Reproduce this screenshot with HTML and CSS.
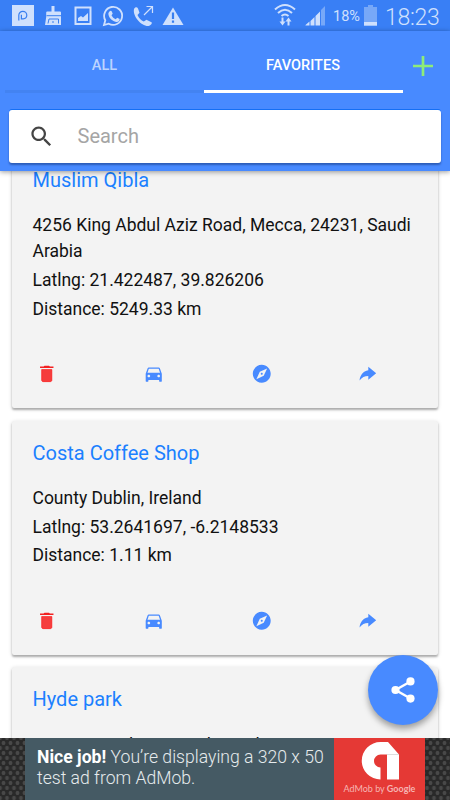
FILE: index.html
```html
<!DOCTYPE html>
<html lang="en">
<head>
<meta charset="utf-8">
<title>Favorites</title>
<link rel="stylesheet" href="styles.css">
</head>
<body>
<svg class="symbols" width="0" height="0" aria-hidden="true">
  <symbol id="trash" viewBox="0 0 24 24"><path fill="#f53d3d" stroke="#f00" stroke-width=".6" d="M6.3 19c0 1.1.7 1.8 1.7 1.8h8c1 0 1.700-.7 1.700-1.800V7.300H6.300z"/><path fill="#f32020" d="M19.500 4H15.500l-1-1h-5l-1 1H4.500v1.700h15z"/></symbol>
  <symbol id="car" viewBox="0 0 24 24"><path d="M18.920 6.010C18.720 5.420 18.160 5 17.500 5h-11c-.66 0-1.210.42-1.420 1.010L3 12v8c0 .55.45 1 1 1h1c.55 0 1-.45 1-1v-1h12v1c0 .55.45 1 1 1h1c.55 0 1-.45 1-1v-8l-2.080-5.990zM6.500 16c-.83 0-1.500-.67-1.500-1.500S5.670 13 6.500 13s1.500.67 1.500 1.500S7.330 16 6.500 16zm11 0c-.83 0-1.500-.67-1.500-1.500s.67-1.500 1.500-1.500 1.500.67 1.500 1.500-.67 1.500-1.500 1.500zM5 11l1.500-4.500h11L19 11H5z"/></symbol>
  <symbol id="compass" viewBox="0 0 24 24"><path d="M12 10.900c-.61 0-1.100.49-1.100 1.100s.49 1.100 1.100 1.100 1.100-.49 1.100-1.100-.49-1.100-1.100-1.100zM12 2C6.480 2 2 6.480 2 12s4.480 10 10 10 10-4.480 10-10S17.520 2 12 2zm2.190 12.190L6 18l3.810-8.190L18 6l-3.810 8.190z"/></symbol>
  <symbol id="forward" viewBox="0 0 24 24"><path d="M11.500 8.200V4.100L20.300 11.400l-8.800 7.300v-4.300c-4.300 0-7 1.300-9.800 5 .8-5.500 3.700-10.100 9.800-11.200z"/></symbol>
</svg>
<div class="screen">
  <div class="status">
    <svg class="status-left" width="190" height="31" viewBox="0 0 190 31">
      <path fill="#cfe0fd" d="M12 5h22v21H12z"/>
      <path fill="none" stroke="#397ff0" stroke-width="1.200" d="M18.800 20.500v-5.200a4 4 0 0 1 8 0 3.700 3.700 0 0 1-3.800 3.500h-1.600v-4"/>
      <g fill="#cfe0fd">
        <path d="M51.500 6h3v5.500h5.500q1 0 1 1V25H45l1.200-8v-4.500q0-1 1-1h4.300z"/>
        <path fill-rule="evenodd" d="M74.500 6.500h17v18.500h-17zM76.500 8.500V23h13V8.500z"/>
        <path d="M78 21v-3l3-2 2 1.500 5-4.500v8z"/>
        <path d="m173 7.500 10.500 17.500h-21z"/>
      </g>
      <path fill="none" stroke="#397ff0" stroke-width="1" d="M46.500 15.700h14.500M48 23.500l1-4.500h9.500v4.500M53 23v-2"/>
      <path fill="none" stroke="#cfe0fd" stroke-width="1.800" d="m104 25 1.300-4.700a9 9 0 1 1 3.400 3.400z"/>
      <path fill="#cfe0fd" d="M109.500 11.500c1-1.200 2-.8 2.500.5l.7 1.700-1.200 1.500c1 2 2.300 3.100 4.200 4l1.500-1.500 2.500 1.300c-.2 2.500-2 3.400-4.300 2.700-3.700-1.200-6.700-4.200-7-7.700 0-1 .3-1.800 1.100-2.500z"/>
      <path fill="#cfe0fd" d="M134 9c1-2 3-2.500 4-.5l1.500 4.200-2 2.300c1.500 3.500 3.500 5.300 6.300 6.500l2.700-1.700 5 2.500c1 .8-.5 3.200-3 3.700-7.500.3-16-10-14.500-17z"/>
      <path fill="none" stroke="#cfe0fd" stroke-width="1.200" d="m144 15 8-8M146.500 6.500h6V13"/>
      <path stroke="#397ff0" stroke-width="2.200" d="M173 12.500v6.500M173 20.500v2.300"/>
    </svg>
    <svg class="status-net" width="54" height="31" viewBox="272 0 54 31">
      <g fill="none" stroke="#cfe0fd" stroke-width="2"><path d="M275 9.500q10-9 20 0M278 13q7-6.500 14 0M281.500 16q3.500-3 7 0"/></g>
      <path fill="#cfe0fd" d="M281.500 17.500h2v4h2l-3 4-3-4h2zM287.500 25.500h2v-4h2l-3-4-3 4h2z"/>
      <path fill="#cfe0fd" d="M305.500 25.500h4v-4l-4 3.500zM310.500 25.500h4V17l-4 4zM315.500 25.500h4.500V11.500l-4.500 4.500z"/>
      <path fill="#77a8f8" d="M321 25.500h4V6l-4 4z"/>
    </svg>
    <span class="percent">18%</span>
    <svg class="battery" width="13" height="21" viewBox="0 0 13 21"><path fill="#77a8f8" d="M4 0h5v2h4v19H0V2h4z"/><path fill="#cfe0fd" d="M0 17h13v3.500H0z"/></svg>
    <span class="clock">18:23</span>
  </div>
  <header class="header">
    <nav class="tabs">
      <div class="tab">ALL</div>
      <div class="tab active">FAVORITES</div>
      <svg class="add" width="22" height="22" viewBox="0 0 22 22"><path stroke="#8eec79" stroke-width="2.700" d="M11 1v20M1 11h20"/></svg>
    </nav>
    <div class="search">
      <svg width="27" height="27" viewBox="0 0 24 24"><path fill="#444" d="M15.500 14h-.79l-.28-.27C15.410 12.590 16 11.110 16 9.500 16 5.910 13.090 3 9.500 3S3 5.910 3 9.500 5.910 16 9.500 16c1.610 0 3.090-.59 4.230-1.570l.27.280v.79l5 4.990L20.490 19l-4.990-5zm-6 0C7.010 14 5 11.990 5 9.500S7.010 5 9.500 5 14 7.010 14 9.500 11.990 14 9.500 14z"/></svg>
      <span>Search</span>
    </div>
  </header>
  <main class="content">
    <div class="list">
      <article class="card">
        <h2>Muslim Qibla</h2>
        <p>4256 King Abdul Aziz Road, Mecca, 24231, Saudi Arabia</p>
        <p>Latlng: 21.422487, 39.826206</p>
        <p>Distance: 5249.33 km</p>
        <div class="actions"><svg><use href="#trash"/></svg><svg><use href="#car"/></svg><svg><use href="#compass"/></svg><svg><use href="#forward"/></svg></div>
      </article>
      <article class="card">
        <h2>Costa Coffee Shop</h2>
        <p>County Dublin, Ireland</p>
        <p>Latlng: 53.2641697, -6.2148533</p>
        <p>Distance: 1.11 km</p>
        <div class="actions"><svg><use href="#trash"/></svg><svg><use href="#car"/></svg><svg><use href="#compass"/></svg><svg><use href="#forward"/></svg></div>
      </article>
      <article class="card">
        <h2>Hyde park</h2>
        <p>Greater London, United Kingdom</p>
      </article>
    </div>
    <div class="fab"><svg width="32" height="32" viewBox="0 0 32 32"><path fill="none" stroke="#fff" stroke-width="2.400" d="M23.500 7.500 8.500 16l15 8.500"/><g fill="#fff"><circle cx="8.500" cy="16" r="4.100"/><circle cx="23.500" cy="7.400" r="4.100"/><circle cx="23.500" cy="24.600" r="4.100"/></g></svg></div>
  </main>
  <footer class="ad">
    <div class="ad-text"><b>Nice job!</b> You’re displaying a 320 x 50<br>test ad from AdMob.</div>
    <div class="admob">
      <svg width="38" height="38" viewBox="0 0 38 38"><path fill="#fff" d="M19.500 37.500A18.700 18.700 0 1 1 19.500 0H27l11 12.500v25H26V12.500h-6.500a6.500 6.500 0 0 0 0 13z"/><path stroke="#ddd" d="M26 12.500h12"/></svg>
      <span>AdMob by <b>Google</b></span>
    </div>
  </footer>
</div>
</body>
</html>
```
FILE: styles.css
```css
* { box-sizing: border-box; }
body { margin: 0; font-family: Roboto, "Liberation Sans", sans-serif; }
.symbols { position: absolute; }
.screen { width: 450px; height: 800px; display: flex; flex-direction: column; overflow: hidden; background: #fff; }
.status { height: 31px; flex: none; display: flex; align-items: center; background: #397ff5; color: #cfe0fd; }
.status svg { flex: none; }
.status-net { margin-left: 82px; }
.percent { width: 32px; margin-left: 7px; font-size: 14.500px; line-height: 31px; padding-top: 2px; }
.battery { margin-left: -1px; }
.clock { margin-left: 8px; font-size: 23px; font-weight: 300; line-height: 31px; padding-top: 3px; letter-spacing: -.3px; }
.header { height: 140px; flex: none; background: #488aff; position: relative; z-index: 1; box-shadow: 0 1px 5px rgba(0,0,0,.4); }
.tabs { height: 62px; display: flex; align-items: center; padding-left: 5px; }
.tab { width: 199px; height: 62px; line-height: 69px; text-align: center; font-size: 14.500px; font-weight: 500; color: #bcd4ff; border-bottom: 3px solid #4383f2; }
.tab.active { color: #fff; border-color: #fff; padding-right: 1px; }
.add { margin: 7px 0 0 8.500px; }
.search { height: 53px; margin: 17px 9px 0; padding-left: 19px; display: flex; align-items: center; background: #fff; border-radius: 3px; box-shadow: 0 2px 2px rgba(0,25,80,.4), 0 -1px 0 #146ff5; }
.search span { margin: -2px 0 0 22.500px; font-size: 20px; color: #a5a5a5; }
.content { flex: 1; min-height: 0; position: relative; overflow: hidden; }
.list { margin-top: -22.600px; padding: 0 12.500px 0 12px; display: flex; flex-direction: column; gap: 12.500px; }
.card { flex: none; height: 234px; padding: 20px 20px 0 20.500px; border-radius: 2px; background: #f3f3f3; box-shadow: 0 2px 2px rgba(0,0,0,.25), 0 1px 4px rgba(0,0,0,.16); }
.card:first-child { height: 260px; }
.card h2 { margin: 0 0 19px; font-size: 20px; line-height: 25px; font-weight: 400; color: #1b80ff; }
.card:last-child h2 { margin-bottom: 20px; }
.card p { margin: 0 0 2.700px; font-size: 17.500px; line-height: 26px; color: #111; }
.actions { display: flex; gap: 86px; margin: 41.300px 0 0 3.300px; }
.actions svg { width: 21.500px; height: 21.500px; fill: #488aff; }
.fab { position: absolute; right: 12.500px; bottom: 13px; width: 70px; height: 70px; border-radius: 50%; display: grid; place-items: center; background: #488aff; box-shadow: 0 4px 6px rgba(0,0,0,.35); }
.ad { height: 62px; flex: none; display: flex; padding: 0 25px; background-color: #292929; background-image: radial-gradient(circle, #484848 1.700px, transparent 2.200px), radial-gradient(circle, #484848 1.700px, transparent 2.200px); background-size: 7px 10px; background-position: 0 0, 3.500px 5px; }
.ad-text { width: 309px; padding: 9px 0 0 12px; background: #455a64; color: #e6ebed; font-size: 17.600px; font-weight: 300; line-height: 20.500px; white-space: nowrap; }
.ad-text b { font-weight: 700; color: #fff; }
.admob { width: 91px; background: #e53935; display: flex; flex-direction: column; align-items: center; padding-top: 4px; }
.admob span { margin-top: 2px; font-family: Lato, sans-serif; font-size: 9px; line-height: 14px; color: #f6b4b2; white-space: nowrap; }
```
